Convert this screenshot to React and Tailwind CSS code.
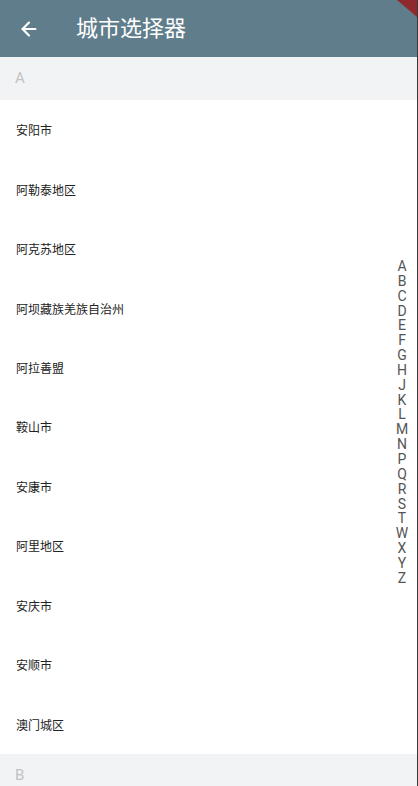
import { ArrowLeft } from "lucide-react";

const cities = [
  "安阳市",
  "阿勒泰地区",
  "阿克苏地区",
  "阿坝藏族羌族自治州",
  "阿拉善盟",
  "鞍山市",
  "安康市",
  "阿里地区",
  "安庆市",
  "安顺市",
  "澳门城区",
];

const letters = "ABCDEFGHJKLMNPQRSTWXYZ".split("");

export default function App() {
  return (
    <div className="relative h-[786px] w-[418px] overflow-hidden bg-white font-['Roboto','Noto_Sans_CJK_SC',sans-serif] border-r border-[#3a3a3a]">
      <header className="flex h-[57px] items-center bg-[#607d8b] text-white">
        <button className="ml-[17px] flex h-6 w-6 items-center justify-center">
          <ArrowLeft size={22} strokeWidth={2.4} />
        </button>
        <h1 className="ml-[35px] text-[22px] leading-none">城市选择器</h1>
      </header>

      <div className="flex h-[43px] items-center bg-[#f2f3f5] pl-[15px] text-[15px] text-[#c2c2c2]">A</div>
      <ul>
        {cities.map((city) => (
          <li key={city} className="flex h-[59.45px] items-center pl-4 pt-[3px] text-[12px] text-[#222]">
            {city}
          </li>
        ))}
      </ul>
      <div className="flex h-[43px] items-center bg-[#f2f3f5] pl-[15px] text-[15px] text-[#c2c2c2]">B</div>

      <div className="absolute right-[7px] top-[259px] flex w-[16px] flex-col items-center text-[14px] leading-[14.85px] text-[#555]">
        {letters.map((l) => (
          <span key={l}>{l}</span>
        ))}
      </div>

      <svg className="absolute right-0 top-0" width="20" height="20" viewBox="0 0 20 20">
        <polygon points="0,0 20,0 20,17" fill="#8e2a2e" />
      </svg>
    </div>
  );
}
